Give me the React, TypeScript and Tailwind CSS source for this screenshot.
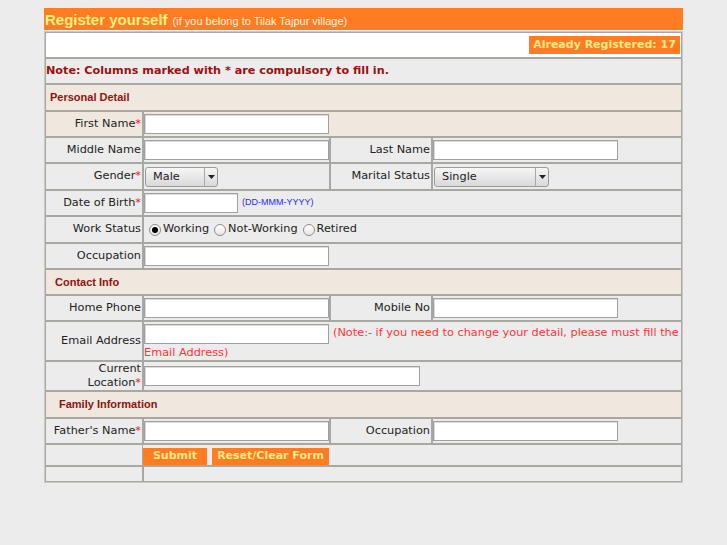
import React from "react";

const cell = "border border-[#a9a7a2] bg-[#ececec]";
const beige = "border border-[#a9a7a2] bg-[#f0e8de]";
const labelCls = "flex items-center justify-end text-right pr-px text-[11.3px] text-[#222] font-['DejaVu_Sans',sans-serif]";
const inputCls = "h-[20px] border border-[#a0a0a0] bg-white shadow-[inset_1px_1px_0_#dcdcdc] outline-none";
const star = <span className="text-[#ee1111]">*</span>;
const sectionCls = "col-span-4 flex items-center text-[11px] font-bold text-[#8e1414] font-['Liberation_Sans',Arial,sans-serif]";

function Sel({ text, widthCls, textCls }: { text: string; widthCls: string; textCls: string }) {
  return (
    <div className={`relative flex h-[20px] items-center rounded-[3px] border border-[#9b9b9b] bg-gradient-to-b from-[#f6f6f6] to-[#d9d9d9] ${widthCls}`}>
      <span className={`flex-1 pt-px text-[11.3px] text-[#222] font-['DejaVu_Sans',sans-serif] ${textCls}`}>{text}</span>
      <div className="flex h-full w-[13px] items-center justify-center border-l border-[#a8a8a8]">
        <svg width="7" height="4" viewBox="0 0 7 4"><path d="M0 0h7L3.5 4z" fill="#222" /></svg>
      </div>
    </div>
  );
}

function Radio({ checked }: { checked?: boolean }) {
  return (
    <span className="inline-flex h-[12px] w-[12px] items-center justify-center rounded-full border border-[#8d8d8d] bg-gradient-to-b from-white to-[#e6e6e6]">
      {checked && <span className="h-[6px] w-[6px] rounded-full bg-black" />}
    </span>
  );
}

export default function App() {
  return (
    <div className="min-h-[545px] bg-[#ececec] pt-[8px]">
      <div className="ml-[44px] w-[639px]">
        <div className="flex h-[22px] items-end bg-[#ff7c22] pb-[3px] pl-px font-['Liberation_Sans',Arial,sans-serif]">
          <span className="text-[15px] font-bold leading-none text-[#fff27e]">Register yourself</span>
          <span className="ml-[5px] text-[11px] leading-none text-[#fff6e0]">(if you belong to Tilak Tajpur village)</span>
        </div>
        <div className="mt-px border border-[#cbc9c4]">
          <div className="grid grid-cols-[98px_187px_102px_250px] grid-rows-[26px_26px_27px_26px_26px_27px_26px_27px_26px_26px_26px_40px_30px_27px_26px_22px_16px]">
            {/* Row 1 */}
            <div className="col-span-4 flex items-center justify-end border border-[#a9a7a2] bg-white pr-px">
              <div className="flex h-[18px] w-[151px] items-center justify-center bg-[#ff7c22] text-[11px] font-bold text-[#ffe98a] font-['DejaVu_Sans',sans-serif]">
                Already Registered: 17
              </div>
            </div>
            {/* Note */}
            <div className={`col-span-4 flex items-center ${cell} text-[11.2px] font-bold text-[#9a1212] font-['DejaVu_Sans',sans-serif]`}>
              Note: Columns marked with * are compulsory to fill in.
            </div>
            {/* Personal Detail */}
            <div className={`${sectionCls} ${beige} pl-[4px]`}>Personal Detail</div>
            {/* First Name */}
            <div className={`${labelCls} ${beige} pr-[2px]`}>First Name{star}</div>
            <div className={`col-span-3 flex items-center ${beige}`}>
              <input className={`${inputCls} w-[185px]`} />
            </div>
            {/* Middle / Last */}
            <div className={`${labelCls} ${cell}`}>Middle Name</div>
            <div className={`flex items-center ${cell}`}>
              <input className={`${inputCls} w-[185px]`} />
            </div>
            <div className={`${labelCls} ${cell}`}>Last Name</div>
            <div className={`flex items-center ${cell}`}>
              <input className={`${inputCls} w-[185px]`} />
            </div>
            {/* Gender / Marital */}
            <div className={`${labelCls} ${cell} pr-[2px]`}>Gender{star}</div>
            <div className={`flex items-center ${cell} pl-px`}>
              <Sel text="Male" widthCls="w-[73px]" textCls="pl-[7px]" />
            </div>
            <div className={`${labelCls} ${cell}`}>Marital Status</div>
            <div className={`flex items-center ${cell} pl-px`}>
              <Sel text="Single" widthCls="w-[115px]" textCls="pl-[7px]" />
            </div>
            {/* DOB */}
            <div className={`${labelCls} ${cell} pr-[2px]`}>Date of Birth{star}</div>
            <div className={`col-span-3 flex items-center ${cell}`}>
              <input className={`${inputCls} w-[94px]`} />
              <span className="ml-[4px] text-[9px] text-[#2a2aff] font-['Liberation_Sans',Arial,sans-serif]">(DD-MMM-YYYY)</span>
            </div>
            {/* Work status */}
            <div className={`${labelCls} ${cell}`}>Work Status</div>
            <div className={`col-span-3 flex items-center ${cell} pl-[5px] text-[11.3px] text-[#222] font-['DejaVu_Sans',sans-serif]`}>
              <Radio checked />
              <span className="ml-[2px]">Working</span>
              <span className="ml-[5px] flex"><Radio /></span>
              <span className="ml-[2px]">Not-Working</span>
              <span className="ml-[5px] flex"><Radio /></span>
              <span className="ml-[2px]">Retired</span>
            </div>
            {/* Occupation */}
            <div className={`${labelCls} ${cell}`}>Occupation</div>
            <div className={`col-span-3 flex items-center ${cell}`}>
              <input className={`${inputCls} w-[185px]`} />
            </div>
            {/* Contact Info */}
            <div className={`${sectionCls} ${beige} pl-[9px]`}>Contact Info</div>
            {/* Home / Mobile */}
            <div className={`${labelCls} ${cell} pr-[3px]`}>Home Phone</div>
            <div className={`flex items-center ${cell}`}>
              <input className={`${inputCls} w-[185px]`} />
            </div>
            <div className={`${labelCls} ${cell}`}>Mobile No</div>
            <div className={`flex items-center ${cell}`}>
              <input className={`${inputCls} w-[185px]`} />
            </div>
            {/* Email */}
            <div className={`${labelCls} ${cell}`}>Email Address</div>
            <div className={`col-span-3 ${cell} pt-[2px] text-[11.3px] leading-[18px] text-[#ff3535] font-['DejaVu_Sans',sans-serif]`}>
              <input className={`${inputCls} inline-block w-[185px] align-top`} />
              <span className="ml-[4px]">(Note:- if you need to change your detail, please must fill the Email Address)</span>
            </div>
            {/* Current location */}
            <div className={`${labelCls} ${cell} leading-[14px] pr-[2px]`}>
              <span>Current<br />Location{star}</span>
            </div>
            <div className={`col-span-3 flex items-center ${cell}`}>
              <input className={`${inputCls} w-[276px]`} />
            </div>
            {/* Family Information */}
            <div className={`${sectionCls} ${beige} pl-[13px]`}>Family Information</div>
            {/* Father / Occupation */}
            <div className={`${labelCls} ${cell} pr-[2px]`}>Father's Name{star}</div>
            <div className={`flex items-center ${cell}`}>
              <input className={`${inputCls} w-[185px]`} />
            </div>
            <div className={`${labelCls} ${cell} pr-[3px]`}>Occupation</div>
            <div className={`flex items-center ${cell}`}>
              <input className={`${inputCls} w-[185px]`} />
            </div>
            {/* Buttons */}
            <div className={`${cell}`} />
            <div className={`col-span-3 flex items-end gap-[5px] ${cell} -ml-px`}>
              <button className="flex h-[17px] w-[64px] items-center justify-center bg-[#ff7c22] text-[11px] font-bold text-[#ffe98a] font-['DejaVu_Sans',sans-serif]">Submit</button>
              <button className="flex h-[17px] w-[117px] items-center justify-center bg-[#ff7c22] text-[11px] font-bold text-[#ffe98a] font-['DejaVu_Sans',sans-serif]">Reset/Clear Form</button>
            </div>
            {/* Last */}
            <div className={`${cell}`} />
            <div className={`col-span-3 ${cell}`} />
          </div>
        </div>
      </div>
    </div>
  );
}
